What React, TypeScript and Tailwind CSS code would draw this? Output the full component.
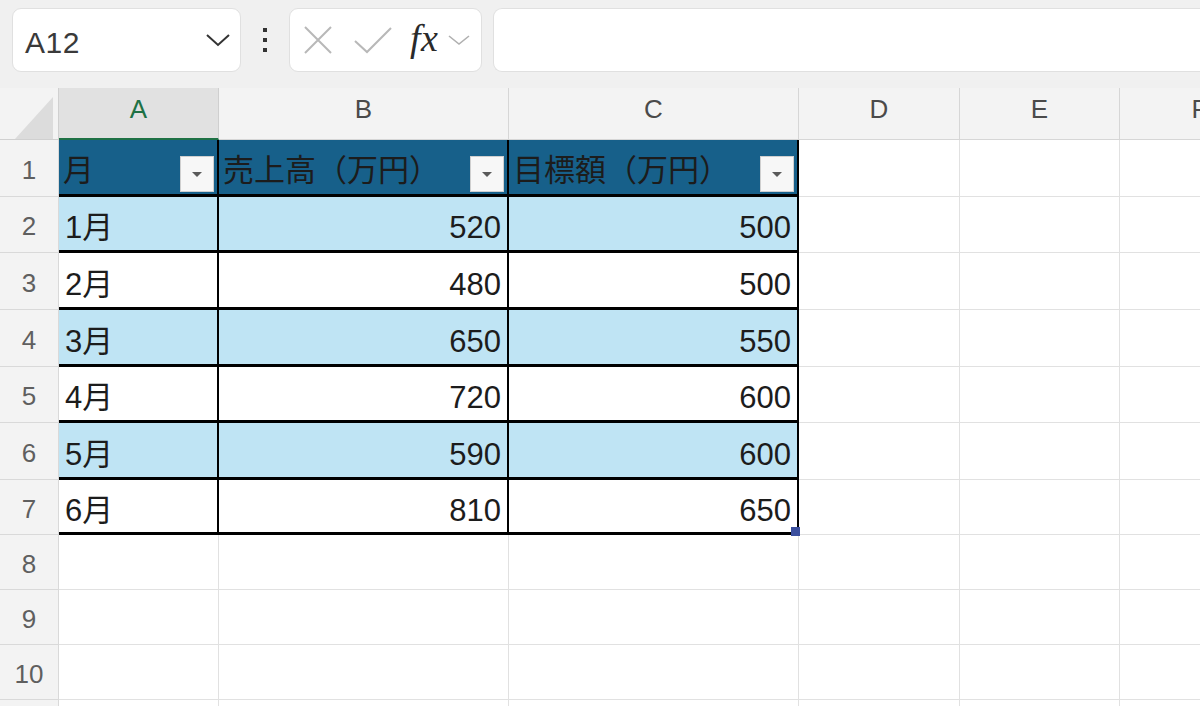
import React from "react";

const rowHeights = [57, 56, 57, 57, 56, 57, 55, 55, 55, 55, 30];

const data: string[][] = [
  ["月", "売上高（万円）", "目標額（万円）"],
  ["1月", "520", "500"],
  ["2月", "480", "500"],
  ["3月", "650", "550"],
  ["4月", "720", "600"],
  ["5月", "590", "600"],
  ["6月", "810", "650"],
];

const colLetters = ["A", "B", "C", "D", "E", "F"];

function FilterButton() {
  return (
    <div className="absolute right-[3px] bottom-[2px] w-[34px] h-[36px] bg-[#f7f7f7] border border-[#cfcfcf] flex items-center justify-center">
      <svg width="12" height="7" viewBox="0 0 12 7">
        <path d="M1 1 L11 1 L6 6 Z" fill="#5a5a5a" />
      </svg>
    </div>
  );
}

function Cell({ r, c }: { r: number; c: number }) {
  const h = rowHeights[r - 1];
  if (c === 0) {
    return (
      <div
        className="bg-[#f3f3f3] border-r border-b border-[#d9d9d9] flex items-center justify-center pt-[4px] text-[26px] text-[#5f5f5f]"
        style={{ height: h }}
      >
        {r <= 10 ? r : ""}
      </div>
    );
  }
  const inTable = r <= 7 && c <= 3;
  if (!inTable) {
    return <div className="bg-white border-r border-b border-[#e1e1e1]" style={{ height: h }} />;
  }
  const text = data[r - 1][c - 1];
  if (r === 1) {
    return (
      <div
        className="relative bg-[#17608a] border-r-2 border-b-[3px] border-black flex items-center pl-[4px] pt-[9px] text-[31px] text-[#1c1c1c] overflow-hidden"
        style={{ height: h }}
      >
        <span className="whitespace-nowrap">{text}</span>
        <FilterButton />
      </div>
    );
  }
  const bg = r % 2 === 0 ? "bg-[#bfe4f4]" : "bg-white";
  const align = c === 1 ? "justify-start pl-[6px]" : "justify-end pr-[6px]";
  return (
    <div
      className={`relative ${bg} border-r-2 border-b-[3px] border-black flex items-center pt-[10px] ${align} text-[31px] text-[#1c1c1c]`}
      style={{ height: h }}
    >
      <span className="whitespace-nowrap">{text}</span>
      {r === 7 && c === 3 && (
        <div className="absolute right-[-3px] bottom-[-4px] w-[9px] h-[9px] bg-[#3b4f9e]" />
      )}
    </div>
  );
}

export default function App() {
  return (
    <div className="w-[1200px] h-[706px] overflow-hidden bg-white font-['Liberation_Sans','Noto_Sans_CJK_JP',sans-serif]">
      {/* toolbar */}
      <div className="h-[88px] bg-[#f0f0f0] flex items-start pt-[8px] pl-[12px]">
        <div className="w-[229px] h-[64px] shrink-0 bg-white rounded-[9px] border border-[#e0e0e0] flex items-center justify-between pl-[12px] pr-[9px]">
          <span className="text-[30px] text-[#3a3a3a] tracking-[0.5px] pt-[5px]">A12</span>
          <svg width="26" height="14" viewBox="0 0 26 14">
            <path d="M2 2 L13 12 L24 2" fill="none" stroke="#333" strokeWidth="2" />
          </svg>
        </div>
        <div className="w-[48px] h-[64px] shrink-0 flex flex-col items-center justify-center gap-[6px]">
          <div className="w-[4px] h-[4px] bg-[#333]" />
          <div className="w-[4px] h-[4px] bg-[#333]" />
          <div className="w-[4px] h-[4px] bg-[#333]" />
        </div>
        <div className="w-[193px] h-[64px] shrink-0 bg-white rounded-[9px] border border-[#e0e0e0] flex items-center pl-[13px]">
          <svg width="30" height="28" viewBox="0 0 30 28">
            <path d="M2 1 L28 27 M28 1 L2 27" fill="none" stroke="#b8b8b8" strokeWidth="2" />
          </svg>
          <svg className="ml-[21px]" width="38" height="28" viewBox="0 0 38 28">
            <path d="M1 15 L13 26 L37 2" fill="none" stroke="#b8b8b8" strokeWidth="2" />
          </svg>
          <span className="ml-[18px] font-['Liberation_Serif',serif] italic text-[38px] text-[#2a2a2a] leading-none tracking-[0.5px] pb-[4px]">
            fx
          </span>
          <svg className="ml-[9px]" width="24" height="12" viewBox="0 0 24 12">
            <path d="M2 2 L12 10 L22 2" fill="none" stroke="#b0b0b0" strokeWidth="1.6" />
          </svg>
        </div>
        <div className="ml-[11px] flex-1 h-[64px] bg-white rounded-l-[9px] border border-r-0 border-[#e0e0e0]" />
      </div>

      {/* sheet */}
      <div className="grid grid-cols-[59px_160px_290px_290px_161px_160px_160px]">
        {/* column header row */}
        <div className="h-[52px] bg-[#f3f3f3] border-r border-b border-[#d0d0d0] relative">
          <svg className="absolute left-[14px] top-[8px]" width="40" height="44" viewBox="0 0 40 44">
            <path d="M39 1 L39 43 L1 43 Z" fill="#dcdcdc" />
          </svg>
        </div>
        {colLetters.map((l, i) =>
          i === 0 ? (
            <div
              key={l}
              className="h-[52px] bg-[#e1e1e1] border-r border-[#cfcfcf] border-b-2 border-b-[#1e7145] flex items-center justify-center pb-[8px] text-[26px] text-[#1e7145]"
            >
              {l}
            </div>
          ) : (
            <div
              key={l}
              className="h-[52px] bg-[#f3f3f3] border-r border-b border-[#d6d6d6] flex items-center justify-center pb-[8px] text-[26px] text-[#4a4a4a]"
            >
              {l}
            </div>
          )
        )}
        {rowHeights.map((_, ri) =>
          [0, 1, 2, 3, 4, 5, 6].map((c) => <Cell key={`${ri}-${c}`} r={ri + 1} c={c} />)
        )}
      </div>
    </div>
  );
}
